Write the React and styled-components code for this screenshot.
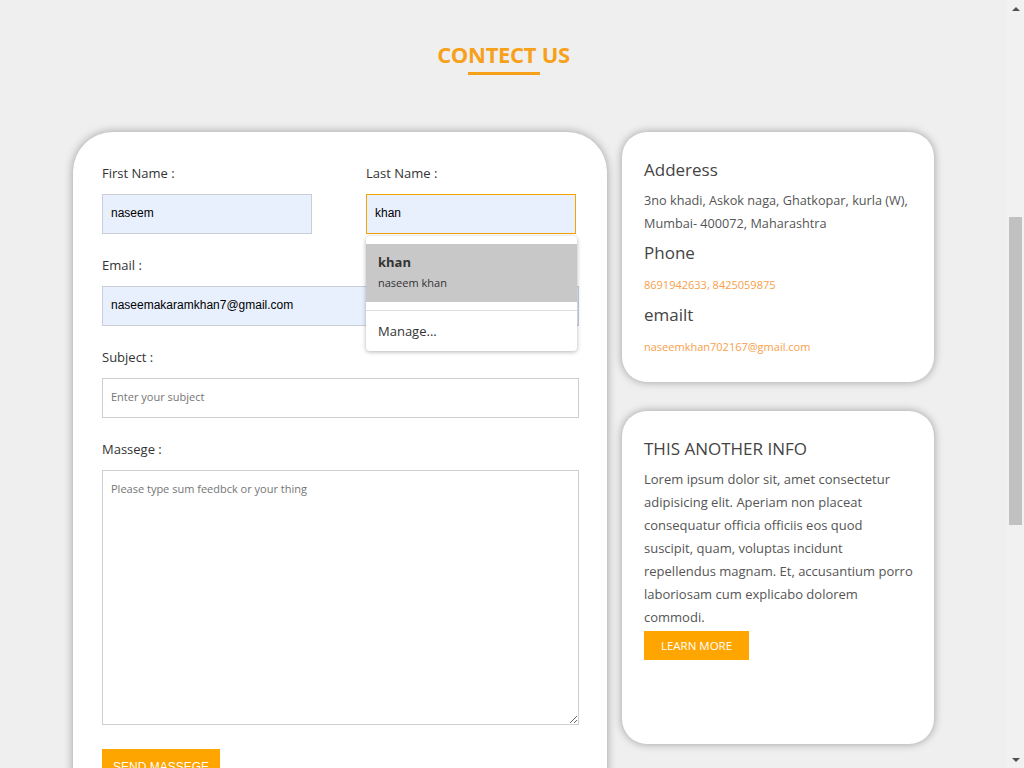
import React from 'react';
import styled, { createGlobalStyle } from 'styled-components';

const FONT = `"Open Sans", "Noto Sans", sans-serif`;
const ORANGE = '#ffa500';

const Global = createGlobalStyle`
  body {
    margin: 0;
    background: #efefef;
    font-family: ${FONT};
    color: #333;
  }
  * { box-sizing: border-box; }
`;

const Shell = styled.div`
  display: flex;
  align-items: flex-start;
`;

const Page = styled.main`
  flex: 1;
  min-width: 0;
  padding: 39px 0 60px;
`;

/* classic scrollbar strip, as seen in the screenshot */
const Rail = styled.div`
  position: sticky;
  top: 0;
  width: 17px;
  height: 100vh;
  flex: none;
  background: #f1f1f1;
  display: flex;
  flex-direction: column;
`;

const RailButton = styled.div`
  height: 17px;
  flex: none;
  display: flex;
  align-items: center;
  justify-content: center;
  svg { display: block; }
`;

const RailTrack = styled.div`
  flex: 1;
  padding: 0 2px;
`;

const RailThumb = styled.div`
  height: 308px;
  background: #c1c1c1;
`;

const Title = styled.h1`
  margin: 0;
  text-align: center;
  font-size: 22px;
  line-height: 30px;
  font-weight: 700;
  color: #f7a11a;
  letter-spacing: -0.3px;
`;

const Underline = styled.div`
  width: 72px;
  height: 3px;
  margin: 3px auto 0;
  background: #f7a11a;
`;

const Container = styled.div`
  width: 861px;
  margin: 57px auto 0;
  display: flex;
  align-items: flex-start;
  gap: 15px;
`;

const FormCard = styled.form`
  width: 534px;
  flex: none;
  background: #fff;
  border-radius: 40px;
  box-shadow: 0 0 10px rgba(0, 0, 0, 0.35);
  padding: 31px 28px 40px 29px;
  display: flex;
  flex-direction: column;
  gap: 21px;
`;

const Row = styled.div`
  display: flex;
  gap: 54px;
`;

const Field = styled.div`
  position: relative;
  display: flex;
  flex-direction: column;
  gap: 11px;
  width: ${(p) => (p.$half ? '210px' : '100%')};
`;

const Label = styled.label`
  font-size: 13px;
  line-height: 20px;
  color: #333;
`;

const Input = styled.input`
  height: 40px;
  width: 100%;
  padding: 0 8px 3px;
  border: 1px solid ${(p) => (p.$focused ? '#f5a300' : p.$filled ? '#c9ced6' : '#cfcfcf')};
  background: ${(p) => (p.$filled ? '#e8f0fe' : '#fff')};
  font-family: ${(p) => (p.$filled ? '"Liberation Sans", Arial, sans-serif' : FONT)};
  font-size: ${(p) => (p.$filled ? '12px' : '11px')};
  color: #000;
  outline: none;
  &::placeholder { color: #757575; }
`;

const TextArea = styled.textarea`
  height: 255px;
  width: 100%;
  padding: 10px 8px;
  border: 1px solid #cfcfcf;
  font-family: ${FONT};
  font-size: 11px;
  outline: none;
  &::placeholder { color: #757575; }
`;

const SendButton = styled.button`
  align-self: flex-start;
  margin-top: 3px;
  height: 36px;
  padding: 0 11px;
  border: none;
  background: ${ORANGE};
  color: #fff;
  font-family: "Liberation Sans", Arial, sans-serif;
  font-size: 12px;
  text-transform: uppercase;
`;

const Suggest = styled.div`
  position: absolute;
  top: 73px;
  left: 0;
  width: 211px;
  background: #fff;
  border-radius: 4px;
  box-shadow: 0 1px 4px rgba(0, 0, 0, 0.3);
  padding: 8px 0 0;
  z-index: 5;
`;

const SuggestItem = styled.div`
  background: #c8c8c8;
  height: 58px;
  padding: 9px 12px 0;
  display: flex;
  flex-direction: column;
`;

const SuggestMain = styled.span`
  font-size: 13px;
  line-height: 18px;
  font-weight: 700;
  color: #333;
`;

const SuggestSub = styled.span`
  margin-top: 4px;
  font-size: 11px;
  line-height: 16px;
  color: #333;
`;

const SuggestDivider = styled.div`
  margin-top: 8px;
  border-top: 1px solid #dcdcdc;
`;

const Manage = styled.div`
  padding: 11px 12px 10px;
  font-size: 13px;
  line-height: 19px;
  color: #333;
`;

const Side = styled.div`
  width: 312px;
  flex: none;
  display: flex;
  flex-direction: column;
  gap: 29px;
`;

const InfoCard = styled.div`
  background: #fff;
  border-radius: 25px;
  box-shadow: 0 0 8px rgba(0, 0, 0, 0.35);
  padding: 26px 14px 17px 22px;
  min-height: ${(p) => p.$minH || 0}px;
`;

const InfoTitle = styled.h3`
  margin: 0 0 7px;
  font-size: 17px;
  line-height: 24px;
  font-weight: 400;
  color: #444;
  text-transform: ${(p) => (p.$upper ? 'uppercase' : 'none')};
`;

const InfoText = styled.p`
  margin: 0 0 ${(p) => (p.$tight ? 2 : 6)}px;
  font-size: ${(p) => p.$size || 13}px;
  line-height: 23px;
  color: #555;
  white-space: nowrap;
`;

const Accent = styled.p`
  margin: 8px 0 7px;
  font-size: 11px;
  line-height: 23px;
  color: #f7a04a;
`;

const LearnButton = styled.button`
  width: 105px;
  height: 29px;
  border: none;
  background: ${ORANGE};
  color: #fff;
  font-family: ${FONT};
  font-size: 11.5px;
  text-transform: uppercase;
`;

const Arrow = ({ down }) => (
  <svg width="8" height="4" viewBox="0 0 8 4">
    <path d={down ? 'M0 0 H8 L4 4 Z' : 'M0 4 H8 L4 0 Z'} fill="#505050" />
  </svg>
);

export default function App() {
  return (
    <>
      <Global />
      <Shell>
        <Page>
          <Title>CONTECT US</Title>
          <Underline />
          <Container>
            <FormCard onSubmit={(e) => e.preventDefault()}>
              <Row>
                <Field $half>
                  <Label>First Name :</Label>
                  <Input $filled defaultValue="naseem" />
                </Field>
                <Field $half>
                  <Label>Last Name :</Label>
                  <Input $filled $focused defaultValue="khan" />
                  <Suggest>
                    <SuggestItem>
                      <SuggestMain>khan</SuggestMain>
                      <SuggestSub>naseem khan</SuggestSub>
                    </SuggestItem>
                    <SuggestDivider />
                    <Manage>Manage...</Manage>
                  </Suggest>
                </Field>
              </Row>
              <Field>
                <Label>Email :</Label>
                <Input $filled defaultValue="naseemakaramkhan7@gmail.com" />
              </Field>
              <Field>
                <Label>Subject :</Label>
                <Input placeholder="Enter your subject" />
              </Field>
              <Field>
                <Label>Massege :</Label>
                <TextArea placeholder="Please type sum feedbck or your thing" />
              </Field>
              <SendButton type="submit">Send Massege</SendButton>
            </FormCard>
            <Side>
              <InfoCard>
                <InfoTitle>Adderess</InfoTitle>
                <InfoText $size={12.7}>
                  3no khadi, Askok naga, Ghatkopar, kurla (W),
                  <br />
                  Mumbai- 400072, Maharashtra
                </InfoText>
                <InfoTitle>Phone</InfoTitle>
                <Accent>8691942633, 8425059875</Accent>
                <InfoTitle>emailt</InfoTitle>
                <Accent>naseemkhan702167@gmail.com</Accent>
              </InfoCard>
              <InfoCard $minH={333}>
                <InfoTitle $upper>This another info</InfoTitle>
                <InfoText $tight>
                  Lorem ipsum dolor sit, amet consectetur
                  <br />
                  adipisicing elit. Aperiam non placeat
                  <br />
                  consequatur officia officiis eos quod
                  <br />
                  suscipit, quam, voluptas incidunt
                  <br />
                  repellendus magnam. Et, accusantium porro
                  <br />
                  laboriosam cum explicabo dolorem
                  <br />
                  commodi.
                </InfoText>
                <LearnButton type="button">Learn More</LearnButton>
              </InfoCard>
            </Side>
          </Container>
        </Page>
        <Rail aria-hidden="true">
          <RailButton>
            <Arrow />
          </RailButton>
          <RailTrack>
            <RailThumb style={{ marginTop: 200 }} />
          </RailTrack>
          <RailButton>
            <Arrow down />
          </RailButton>
        </Rail>
      </Shell>
    </>
  );
}
